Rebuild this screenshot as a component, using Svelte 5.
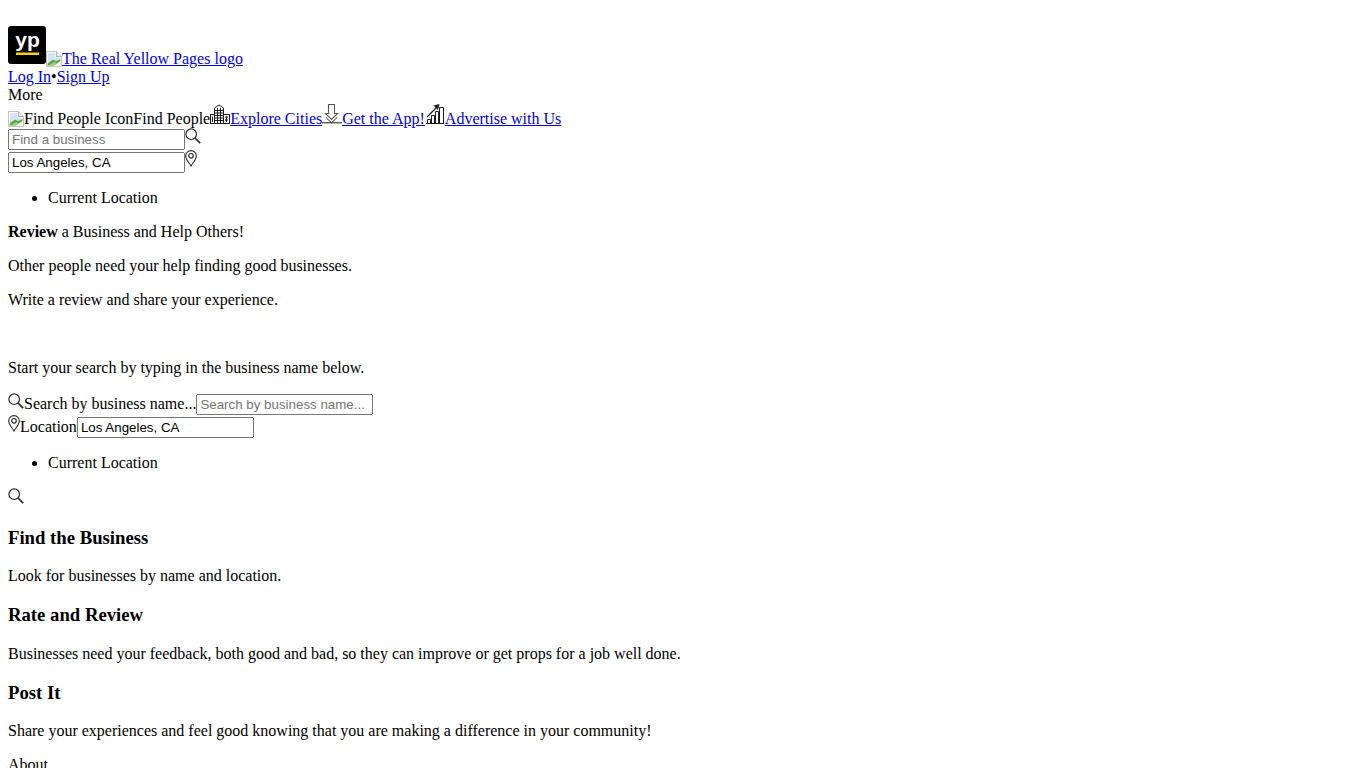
<script>
  const steps = [
    { t: 'Find the Business', d: 'Look for businesses by name and location.' },
    { t: 'Rate and Review', d: 'Businesses need your feedback, both good and bad, so they can improve or get props for a job well done.' },
    { t: 'Post It', d: 'Share your experiences and feel good knowing that you are making a difference in your community!' }
  ];
</script>

{#snippet broken()}
  <svg class="broken" viewBox="0 0 16 16" width="16" height="16" aria-hidden="true">
    <path d="M0.5 0.5H10.5L15.5 5.5V15.5H0.5Z" fill="#fff" stroke="#c2c2c2"/>
    <path d="M10.5 0.5V5.5H15.5" fill="#eee" stroke="#b0b0b0"/>
    <path d="M2 2H9.5V6.5H14V9L2 12Z" fill="#d6e3f5"/>
    <path d="M1.5 14.5V12.5L7 8.5L10 10L14.5 8V10L8 14.5Z" fill="#5da845"/>
    <path d="M3 14.5L8 11L11 12.5L7.5 14.5Z" fill="#9fd088"/>
  </svg>
{/snippet}

{#snippet search()}
  <svg class="ico search" viewBox="0 0 16 16" width="16" height="16" aria-hidden="true">
    <circle cx="6.2" cy="6.2" r="5.3" fill="none" stroke="#2a2a2a" stroke-width="1.2"/>
    <path d="M10 10L15.2 15.2" stroke="#2a2a2a" stroke-width="1.7" fill="none"/>
  </svg>
{/snippet}

{#snippet pin()}
  <svg class="ico pin" viewBox="0 0 12 17" width="12" height="17" aria-hidden="true">
    <path d="M6 16C4.2 12.6 0.7 9.6 0.7 5.9A5.3 5.3 0 0 1 11.3 5.9C11.3 9.6 7.8 12.6 6 16Z" fill="none" stroke="#2a2a2a" stroke-width="1.1"/>
    <circle cx="6" cy="5.8" r="2.3" fill="none" stroke="#2a2a2a" stroke-width="1.2"/>
  </svg>
{/snippet}

<header class="top">
  <div class="brand">
    <a href="#home"><svg class="yp" viewBox="0 0 38 38" width="38" height="38" role="img" aria-label="yp">
      <rect width="38" height="38" rx="3" fill="#000"/>
      <text x="19.5" y="21" text-anchor="middle" font-family="'Liberation Sans', Arial, sans-serif" font-size="21" font-weight="700" fill="#fff">yp</text>
      <rect x="8" y="26.5" width="23" height="2.5" fill="#f5cf1d"/>
    </svg></a><a href="#home">{@render broken()}The Real Yellow Pages logo</a>
  </div>
  <div><a href="#login">Log In</a>•<a href="#signup">Sign Up</a></div>
  <div>More</div>
  <nav>
    <span>{@render broken()}Find People Icon</span><span>Find People</span><svg class="ico" viewBox="0 0 20 20" width="20" height="20" aria-hidden="true">
      <g fill="none" stroke="#1c1c1c" stroke-width="1">
        <path d="M4.5 19.5V4L9 1L13.5 4V19.5"/><path d="M0.5 19.5V10.5H4.5M13.5 10.5H19.5V19.5"/><path d="M0 19.5H20"/>
        <path d="M4.5 6.5H13.5M4.5 9H13.5M4.5 11.5H13.5M4.5 14H13.5M4.5 16.5H13.5M7.5 4V19M10.5 4V19M2.5 12.5V18M16.5 12.5V18M15 13H18M15 16H18"/>
      </g>
    </svg><a href="#cities">Explore Cities</a><svg class="ico" viewBox="0 0 20 20" width="20" height="20" aria-hidden="true">
      <path d="M6.5 0.5H12.5V9.5H15.5L9.5 15.5L3.5 9.5H6.5Z" fill="none" stroke="#555" stroke-width="1.1"/>
      <path d="M0 18.8H20" stroke="#1c1c1c" stroke-width="1"/>
      <path d="M4 13.5L9.5 18.8L15 13.5" fill="none" stroke="#1c1c1c" stroke-width="0.9"/>
    </svg><a href="#app">Get the App!</a><svg class="ico" viewBox="0 0 20 20" width="20" height="20" aria-hidden="true">
      <g fill="none" stroke="#1c1c1c" stroke-width="1">
        <path d="M2.5 19.5V15.5H5.5V19.5M6.5 19.5V11.5H9.5V19.5M10.5 19.5V7.5H13.5V19.5M14.5 19.5V3.5H18.5V19.5M1 19.5H19"/>
      </g>
      <path d="M2 13L12 3" stroke="#1c1c1c" stroke-width="1.3"/><path d="M14.5 0L8.5 1.5L13 6Z" fill="#1c1c1c"/>
    </svg><a href="#advertise">Advertise with Us</a>
  </nav>
  <form onsubmit={(e) => e.preventDefault()}>
    <div><input placeholder="Find a business" />{@render search()}</div>
    <div><input value="Los Angeles, CA" />{@render pin()}</div>
    <ul><li>Current Location</li></ul>
  </form>
</header>

<main>
  <p><b>Review</b> a Business and Help Others!</p>
  <p>Other people need your help finding good businesses.</p>
  <p>Write a review and share your experience.</p>
  <p>&nbsp;</p>
  <p>Start your search by typing in the business name below.</p>

  <form onsubmit={(e) => e.preventDefault()}>
    <div>{@render search()}<label for="biz">Search by business name...</label><input id="biz" placeholder="Search by business name..." /></div>
    <div>{@render pin()}<label for="loc">Location</label><input id="loc" value="Los Angeles, CA" /></div>
    <ul><li>Current Location</li></ul>
    <div>{@render search()}</div>
  </form>

  {#each steps as s}
    <h3>{s.t}</h3>
    <p>{s.d}</p>
  {/each}

  <div>About</div>
</main>

<style>
  :global(body) {
    margin: 8px;
    font-family: "Liberation Serif", "Times New Roman", serif;
    font-size: 16px;
    color: #000;
  }
  a { color: #00e; }
  .top { padding-top: 18px; }
  .yp { display: inline-block; vertical-align: baseline; }
  .broken { display: inline-block; vertical-align: -3px; }
  nav { white-space: nowrap; }
  .ico { display: inline-block; vertical-align: baseline; }
  input {
    box-sizing: border-box;
    width: 177px;
    height: 21px;
    font-family: "Liberation Sans", Arial, sans-serif;
    font-size: 13.3333px;
  }
  ul { margin: 16px 0; padding-left: 40px; }
</style>
